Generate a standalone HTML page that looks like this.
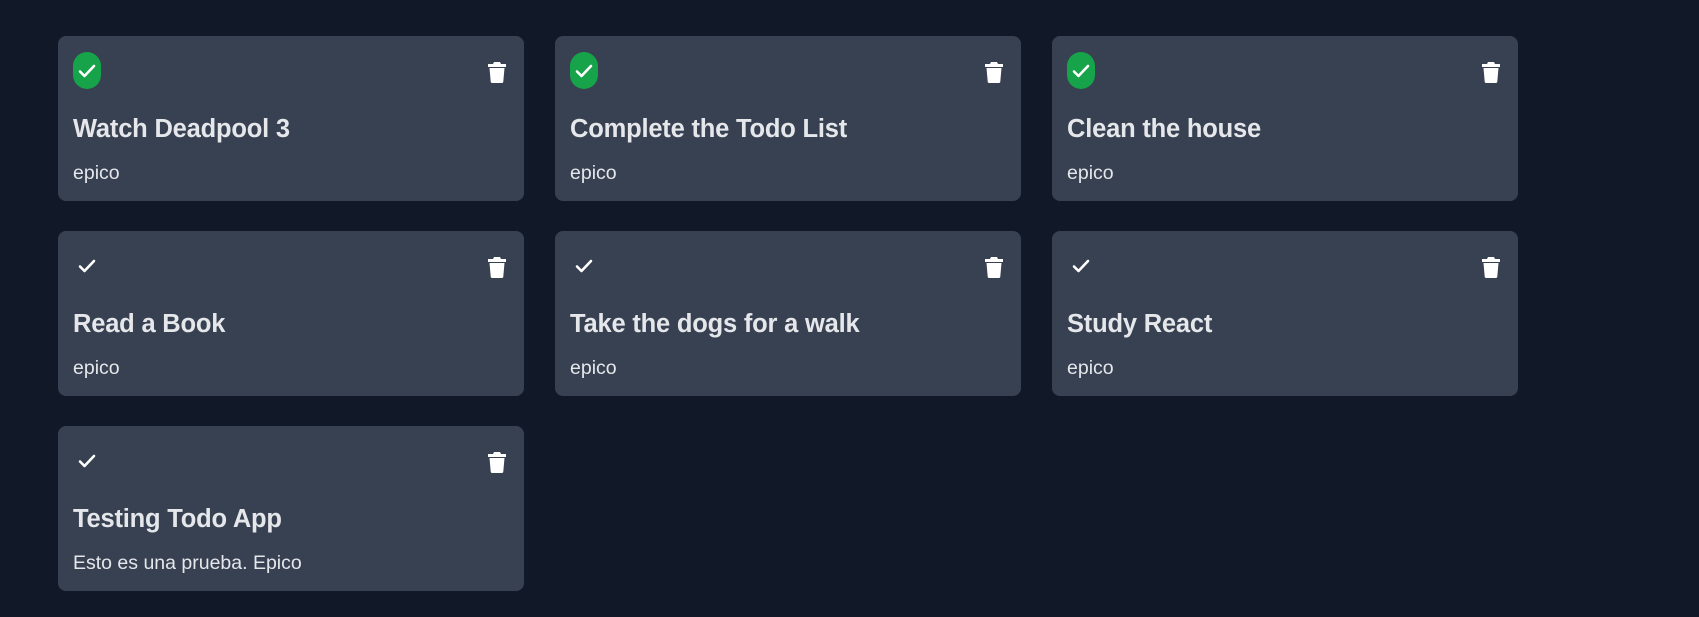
<!DOCTYPE html>
<html><head><style>
body{margin:0;width:1699px;height:617px;background:#111827;font-family:"Liberation Sans",sans-serif;overflow:hidden;position:relative}
.c{position:absolute;width:466px;height:165px;background:#374151;border-radius:8px}
.pill{position:absolute;left:15px;top:16px;width:28px;height:37px;border-radius:14px;background:#16a34a}
.chk{position:absolute;left:19px;top:26px}
.tr{position:absolute;left:430px;top:25px}
.t{position:absolute;left:15px;top:79px;font-size:25.5px;font-weight:bold;color:#e5e7eb;white-space:nowrap;letter-spacing:-0.2px}
.d{position:absolute;left:15px;top:126px;font-size:19.5px;color:#e5e7eb;white-space:nowrap}
</style></head><body>
<div class="c" style="left:58px;top:36px"><div class="pill"></div><svg class="chk" width="20" height="18" viewBox="0 0 20 18"><path d="M3 9.5l4.5 4.5L17 4" stroke="#fff" stroke-width="2.6" fill="none" stroke-linecap="round" stroke-linejoin="round"/></svg><svg class="tr" width="18" height="22" viewBox="0 0 18 22"><path d="M6 1h6l1 2h5v3H0V3h5z M1.5 7h15l-1.2 13.5a1.5 1.5 0 0 1-1.5 1.5H4.2a1.5 1.5 0 0 1-1.5-1.5z" fill="#fff"/></svg><div class="t">Watch Deadpool 3</div><div class="d">epico</div></div>
<div class="c" style="left:555px;top:36px"><div class="pill"></div><svg class="chk" width="20" height="18" viewBox="0 0 20 18"><path d="M3 9.5l4.5 4.5L17 4" stroke="#fff" stroke-width="2.6" fill="none" stroke-linecap="round" stroke-linejoin="round"/></svg><svg class="tr" width="18" height="22" viewBox="0 0 18 22"><path d="M6 1h6l1 2h5v3H0V3h5z M1.5 7h15l-1.2 13.5a1.5 1.5 0 0 1-1.5 1.5H4.2a1.5 1.5 0 0 1-1.5-1.5z" fill="#fff"/></svg><div class="t">Complete the Todo List</div><div class="d">epico</div></div>
<div class="c" style="left:1052px;top:36px"><div class="pill"></div><svg class="chk" width="20" height="18" viewBox="0 0 20 18"><path d="M3 9.5l4.5 4.5L17 4" stroke="#fff" stroke-width="2.6" fill="none" stroke-linecap="round" stroke-linejoin="round"/></svg><svg class="tr" width="18" height="22" viewBox="0 0 18 22"><path d="M6 1h6l1 2h5v3H0V3h5z M1.5 7h15l-1.2 13.5a1.5 1.5 0 0 1-1.5 1.5H4.2a1.5 1.5 0 0 1-1.5-1.5z" fill="#fff"/></svg><div class="t">Clean the house</div><div class="d">epico</div></div>

<div class="c" style="left:58px;top:231px"><svg class="chk" width="20" height="18" viewBox="0 0 20 18"><path d="M3 9.5l4.5 4.5L17 4" stroke="#fff" stroke-width="2.6" fill="none" stroke-linecap="round" stroke-linejoin="round"/></svg><svg class="tr" width="18" height="22" viewBox="0 0 18 22"><path d="M6 1h6l1 2h5v3H0V3h5z M1.5 7h15l-1.2 13.5a1.5 1.5 0 0 1-1.5 1.5H4.2a1.5 1.5 0 0 1-1.5-1.5z" fill="#fff"/></svg><div class="t">Read a Book</div><div class="d">epico</div></div>
<div class="c" style="left:555px;top:231px"><svg class="chk" width="20" height="18" viewBox="0 0 20 18"><path d="M3 9.5l4.5 4.5L17 4" stroke="#fff" stroke-width="2.6" fill="none" stroke-linecap="round" stroke-linejoin="round"/></svg><svg class="tr" width="18" height="22" viewBox="0 0 18 22"><path d="M6 1h6l1 2h5v3H0V3h5z M1.5 7h15l-1.2 13.5a1.5 1.5 0 0 1-1.5 1.5H4.2a1.5 1.5 0 0 1-1.5-1.5z" fill="#fff"/></svg><div class="t">Take the dogs for a walk</div><div class="d">epico</div></div>
<div class="c" style="left:1052px;top:231px"><svg class="chk" width="20" height="18" viewBox="0 0 20 18"><path d="M3 9.5l4.5 4.5L17 4" stroke="#fff" stroke-width="2.6" fill="none" stroke-linecap="round" stroke-linejoin="round"/></svg><svg class="tr" width="18" height="22" viewBox="0 0 18 22"><path d="M6 1h6l1 2h5v3H0V3h5z M1.5 7h15l-1.2 13.5a1.5 1.5 0 0 1-1.5 1.5H4.2a1.5 1.5 0 0 1-1.5-1.5z" fill="#fff"/></svg><div class="t">Study React</div><div class="d">epico</div></div>

<div class="c" style="left:58px;top:426px"><svg class="chk" width="20" height="18" viewBox="0 0 20 18"><path d="M3 9.5l4.5 4.5L17 4" stroke="#fff" stroke-width="2.6" fill="none" stroke-linecap="round" stroke-linejoin="round"/></svg><svg class="tr" width="18" height="22" viewBox="0 0 18 22"><path d="M6 1h6l1 2h5v3H0V3h5z M1.5 7h15l-1.2 13.5a1.5 1.5 0 0 1-1.5 1.5H4.2a1.5 1.5 0 0 1-1.5-1.5z" fill="#fff"/></svg><div class="t">Testing Todo App</div><div class="d">Esto es una prueba. Epico</div></div>
</body></html>
